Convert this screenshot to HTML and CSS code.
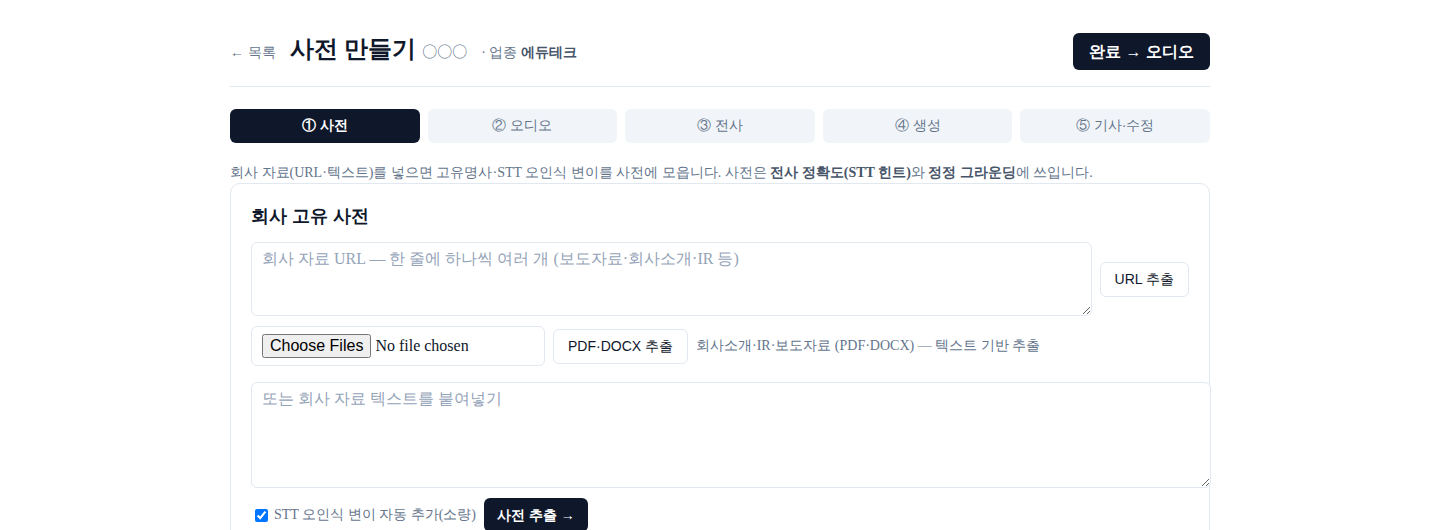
FILE: index.html
```html
<!DOCTYPE html>
<html lang="ko">
<head>
<meta charset="utf-8">
<title>사전 만들기</title>
<link rel="stylesheet" href="styles.css">
</head>
<body>
<div class="page">
  <header class="topbar">
    <div class="topbar-left">
      <a class="back" href="#">← 목록</a>
      <h1 class="title">사전 만들기<span class="dots">○○○</span></h1>
      <span class="industry">· 업종 <b>에듀테크</b></span>
    </div>
    <button class="btn-dark btn-next">완료 → 오디오</button>
  </header>

  <nav class="steps">
    <button class="step active">① 사전</button>
    <button class="step">② 오디오</button>
    <button class="step">③ 전사</button>
    <button class="step">④ 생성</button>
    <button class="step">⑤ 기사·수정</button>
  </nav>

  <p class="desc">회사 자료(URL·텍스트)를 넣으면 고유명사·STT 오인식 변이를 사전에 모읍니다. 사전은 <b>전사 정확도(STT 힌트)</b>와 <b>정정 그라운딩</b>에 쓰입니다.</p>

  <section class="card">
    <h3 class="card-title">회사 고유 사전</h3>
    <div class="row url-row">
      <textarea class="field url-field" placeholder="회사 자료 URL — 한 줄에 하나씩 여러 개 (보도자료·회사소개·IR 등)"></textarea>
      <button class="btn-light">URL 추출</button>
    </div>
    <div class="row file-row">
      <input class="file" type="file" multiple>
      <button class="btn-light">PDF·DOCX 추출</button>
      <span class="hint">회사소개·IR·보도자료 (PDF·DOCX) — 텍스트 기반 추출</span>
    </div>
    <textarea class="field text-field" placeholder="또는 회사 자료 텍스트를 붙여넣기"></textarea>
    <div class="row action-row">
      <label class="check"><input type="checkbox" checked> STT 오인식 변이 자동 추가(소량)</label>
      <button class="btn-dark btn-extract">사전 추출 →</button>
    </div>
  </section>
</div>
</body>
</html>
```

FILE: styles.css
```css
html, body {
  margin: 0;
  padding: 0;
  background: #ffffff;
}

body {
  font-family: "Liberation Serif", serif;
  color: #0f172a;
}

.page {
  width: 980px;
  margin: 0 auto;
  padding-top: 33px;
}

button {
  font-family: "Liberation Sans", sans-serif;
  cursor: pointer;
}

/* header */
.topbar {
  display: flex;
  align-items: center;
  justify-content: space-between;
  padding-bottom: 16px;
  border-bottom: 1px solid #e2e8f0;
}

.topbar-left {
  display: flex;
  align-items: baseline;
  gap: 14px;
  margin-bottom: 4px;
}

.back {
  font-size: 14px;
  color: #64748b;
  text-decoration: none;
}

.title {
  margin: 0;
  font-family: "Liberation Sans", sans-serif;
  font-size: 24px;
  font-weight: 700;
  line-height: 28px;
  color: #0f172a;
}

.dots {
  font-family: "Noto Sans CJK KR", sans-serif;
  font-size: 15px;
  font-weight: 400;
  color: #64748b;
  margin-left: 6px;
}

.industry {
  font-size: 14px;
  color: #64748b;
}

.industry b {
  color: #475569;
  font-weight: 700;
}

.btn-dark {
  background: #0f172a;
  color: #ffffff;
  border: none;
  border-radius: 6px;
  font-weight: 700;
}

.btn-next {
  font-size: 16px;
  line-height: 21px;
  padding: 8px 16px;
}

/* steps */
.steps {
  display: flex;
  gap: 8px;
  margin-top: 22px;
}

.step {
  flex: 1;
  height: 34px;
  border: none;
  border-radius: 6px;
  background: #f1f5f9;
  color: #64748b;
  font-size: 14px;
  padding: 0;
}

.step.active {
  background: #0f172a;
  color: #ffffff;
  font-weight: 700;
}

.desc {
  margin: 20px 0 0;
  font-size: 14px;
  line-height: 20px;
  color: #64748b;
}

.desc b {
  color: #475569;
}

/* card */
.card {
  border: 1px solid #e2e8f0;
  border-radius: 10px;
  padding: 21px 20px 20px;
}

.card-title {
  margin: 0 0 15px;
  font-family: "Liberation Sans", sans-serif;
  font-size: 18px;
  line-height: 22px;
  font-weight: 700;
  color: #0f172a;
}

.row {
  display: flex;
  align-items: center;
  gap: 8px;
}

.field {
  font-family: "Liberation Serif", serif;
  font-size: 16px;
  line-height: 18px;
  color: #0f172a;
  border: 1px solid #e2e8f0;
  border-radius: 6px;
  padding: 7px 10px 13px;
  resize: vertical;
  outline: none;
}

.field::placeholder {
  color: #94a3b8;
}

.url-row {
  margin-bottom: 10px;
}

.url-field {
  flex: 1;
  box-sizing: border-box;
  height: 74px;
}

.btn-light {
  background: #ffffff;
  color: #0f172a;
  border: 1px solid #e2e8f0;
  border-radius: 6px;
  font-size: 14px;
  line-height: 19px;
  padding: 7px 14px;
}

.file-row {
  margin-bottom: 16px;
}

.file {
  box-sizing: border-box;
  width: 294px;
  height: 40px;
  padding: 7px 10px;
  border: 1px solid #e2e8f0;
  border-radius: 6px;
  font-family: "Liberation Serif", serif;
  font-size: 16px;
  color: #0f172a;
}

.file::file-selector-button {
  font-family: "Liberation Sans", sans-serif;
  font-size: 16px;
  margin-right: 4px;
}

.hint {
  font-size: 14px;
  color: #64748b;
}

.text-field {
  display: block;
  width: 100%;
  height: 84px;
  margin: 0 0 10px;
}

.check {
  display: flex;
  align-items: center;
  font-size: 14px;
  color: #64748b;
}

.check input {
  margin: 3px 6px 3px 4px;
}

.btn-extract {
  font-size: 14px;
  line-height: 20px;
  padding: 7px 13px;
}
```
